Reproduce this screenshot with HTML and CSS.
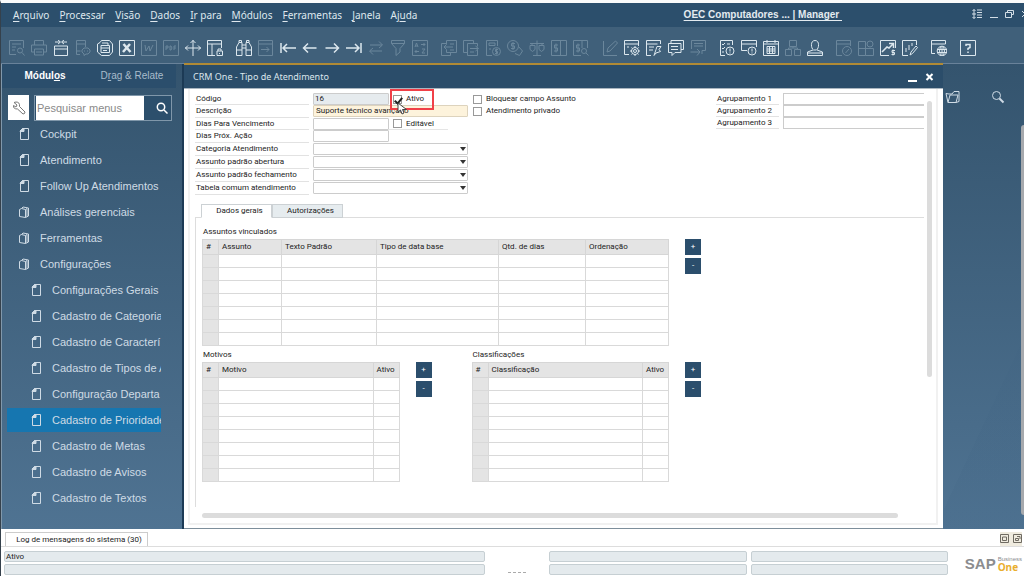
FILE: index.html
```html
<!DOCTYPE html>
<html lang="pt-BR">
<head>
<meta charset="utf-8">
<title>OEC Computadores | Manager</title>
<link rel="stylesheet" href="styles.css">
</head>
<body>
<div class="app">
  <header class="menubar">
    <nav class="menus">
      <button><u>A</u>rquivo</button><button><u>P</u>rocessar</button><button><u>V</u>isão</button><button><u>D</u>ados</button><button><u>I</u>r para</button><button><u>M</u>ódulos</button><button><u>F</u>erramentas</button><button><u>J</u>anela</button><button>Aj<u>u</u>da</button>
    </nav>
    <a class="company" href="#">OEC Computadores ... | Manager&nbsp;</a>
    <div class="winctl">
      <svg width="10" height="10" viewBox="0 0 10 10"><path d="M2 .5v9M.5 2L2 .5 3.500 2M.5 8L2 9.500 3.500 8M5 1h5M5 3.500h5M5 6h5M5 8.500h5M0 5h4"/></svg>
      <svg width="8" height="10" viewBox="0 0 8 10"><path d="M0 8.500h8"/></svg>
      <svg width="9" height="10" viewBox="0 0 9 10"><path d="M2.500 3.500v-2h6v4h-2M.5 3.500h6v5h-6z"/></svg>
      <svg width="8" height="10" viewBox="0 0 8 10"><path d="M1 2l6 6M7 2L1 8"/></svg>
    </div>
  </header>

  <div class="toolbar">
    <div class="tools">
      <button class="off" aria-label="Visualizar"><svg viewBox="0 0 16 16"><path d="M7 14.500H.5V.5h14V8M3 4h9M3 7h4M3 10h3"/><circle cx="11" cy="10.500" r="2.500"/><path d="M13 12.500l2.500 3"/></svg></button>
      <button class="off" aria-label="Imprimir"><svg viewBox="0 0 16 16"><path d="M3.500 5V.5h9V5M3.500 12H.5V5h15v7h-3M3.500 9h9v6h-9zM5 12h6"/></svg></button>
      <button aria-label="Enviar"><svg viewBox="0 0 16 16"><path d="M1.500 6h13v9.500h-13zM1.500 9h13M2 2h5M9 2h5M5 0l2.500 2L5 4M11 0L8.500 2 11 4"/></svg></button>
      <button class="off" aria-label="SMS"><svg viewBox="0 0 16 16"><path d="M5 14.500H1.500V.5h9V7M1.500 4h9M1.500 11h4M9 8h4l2 2v2l-2 2h-2l-2 1.500V14l-2-2v-2zM9 11h1M12 11h1"/></svg></button>
      <button aria-label="Fax"><svg viewBox="0 0 16 16"><path d="M3 2.500L4.500.5h8L15.500 4v8l-3 3.500h-8L.5 12V4zM4 5.500v7h8.500v-7zM4 8h8.500M5 3h6v2M6 10.500h4"/></svg></button>
      <button aria-label="Excel"><svg viewBox="0 0 16 16"><path d="M.5.5h15v15H.5z"/><path class="bold" d="M4.500 4l7 8M11 4l-7 8"/></svg></button>
      <button class="off" aria-label="Word"><svg viewBox="0 0 16 16"><path d="M.5.5h15v15H.5zM4 5l1 6 3-5 1 5 3-6"/></svg></button>
      <button class="off" aria-label="PDF"><svg viewBox="0 0 16 16"><path d="M.5.5h15v15H.5zM3 10V6h2v2H3M7 6v4h1l1-2-1-2zM11 10V6h2M11 8h2"/></svg></button>
      <button aria-label="Mover"><svg viewBox="0 0 16 16"><path d="M8 0v16M0 8h16M5.500 3L8 .5 10.500 3M3 5.500L.5 8 3 10.500M13 5.500L15.500 8 13 10.500"/></svg></button>
      <button aria-label="Bloquear"><svg viewBox="0 0 16 16"><path d="M8 15.500H.5V.5h14V8M.5 4h14M5 4v11.500M10 11h5.500v4.500H10zM11 11V9h3v2M12.500 13v1"/></svg></button>
    </div>
    <div class="tools">
      <button aria-label="Localizar"><svg viewBox="0 0 16 16"><path d="M.5 15.500V7L3 2.500h3V15.500zM15.500 15.500V7L13 2.500h-3V15.500zM6 5h4M6 8h4M.5 10H6M10 10h5.500M3 2.500V.5h2.500v2M10.500 2.500v-2H13v2"/></svg></button>
      <button class="off" aria-label="Adicionar"><svg viewBox="0 0 16 16"><path d="M.5.5h14v15H.5zM.5 4h14M3 9.500h8M8.500 7l2.500 2.500L8.500 12"/></svg></button>
      <button aria-label="Primeiro registro"><svg viewBox="0 0 16 16"><path class="mid" d="M1 3v10M3 8h13M7 4L3 8l4 4"/></svg></button>
      <button aria-label="Anterior"><svg viewBox="0 0 16 16"><path class="mid" d="M1.500 8h13M6 3.500L1.500 8 6 12.500"/></svg></button>
      <button aria-label="Próximo"><svg viewBox="0 0 16 16"><path class="mid" d="M1.500 8h13M10 3.500L14.500 8 10 12.500"/></svg></button>
      <button aria-label="Último registro"><svg viewBox="0 0 16 16"><path class="mid" d="M15 3v10M0 8h13M9 4l4 4-4 4"/></svg></button>
      <button class="off" aria-label="Atualizar"><svg viewBox="0 0 16 16"><path d="M2 5h12M11 1.500L14.500 5 11 8M14 11H2M5 8l-3.500 3L5 14.500"/></svg></button>
      <button class="off" aria-label="Filtrar"><svg viewBox="0 0 16 16"><path d="M1.500.5h13v3L10 8.500V12l-4 3.500v-7L1.500 3.500zM1.500 3.500h13"/></svg></button>
      <button class="off" aria-label="Ordenar"><svg viewBox="0 0 16 16"><path d="M.5.5h15v15H.5zM3 7l1.500-4L6 7M3.500 6h2M9 4.500h4M11.500 3L13 4.500 11.500 6M10 9h3l-3 4h3M3 11.500h4M4.500 10L3 11.500 4.500 13"/></svg></button>
    </div>
    <div class="tools">
      <button class="off" aria-label="Documento base"><svg viewBox="0 0 16 16"><path d="M5.500 4.500v-4h10v12h-10V9.500M9.500 12.500v3h-9v-12h5M3 7h9M5.500 4.500L3 7l2.500 2.500M9 4h4M9 10h4"/></svg></button>
      <button class="off" aria-label="Documento destino"><svg viewBox="0 0 16 16"><path d="M4 12.500H.5V.5h10v3M4.500 3.500h10v3M14.500 10v5.500h-10v-12M7 8.500h8M12.500 6l3 2.500-3 2.500M7 12h4"/></svg></button>
      <button class="off" aria-label="Lucro bruto"><svg viewBox="0 0 16 16"><path d="M7 15.500H1.500V.5h11V6M4 3h6v2.500H4zM4 9h2"/><circle cx="11.500" cy="11.500" r="4"/><path d="M13 9.500h-2.500v2h2v2H10M11.500 8.500v6"/></svg></button>
      <button class="off" aria-label="Meios de pagamento"><svg viewBox="0 0 16 16"><circle cx="6" cy="6" r="5.500"/><path d="M8 3.500H4.500v2.500h3v2.500H4M6 2v8M12 7l3.500 4-3 4.500L8 13.500"/></svg></button>
      <button class="off" aria-label="Balança"><svg viewBox="0 0 16 16"><path d="M8 .5v15M1 3.500h14M4 15.500h8M1 5.500h5v4l-2.500 2L1 9.500zM10 5.500h5v4l-2.500 2-2.500-2zM3 3.500v2M13 3.500v2"/></svg></button>
      <button class="off" aria-label="Razão"><svg viewBox="0 0 16 16"><path d="M.5.5h15v15H.5zM9.500.5v15M7 5H3.500v3h3v3H3M5 3.500v9"/></svg></button>
      <button class="off" aria-label="Consulta de razão"><svg viewBox="0 0 16 16"><path d="M8 15.500H.5V.5h14V8M9 .5V8M7 5H3.500v3h3v3H3M5 3.500v9"/><circle cx="11" cy="11" r="2.500"/><path d="M13 13l2.500 2.500"/></svg></button>
    </div>
    <div class="tools">
      <button class="off" aria-label="Editar"><svg viewBox="0 0 16 16"><path d="M1.500 1v14.500H15M5 12l1-4 7.500-7L15.500 3 8 11z"/></svg></button>
      <button aria-label="Configurar formulário"><svg viewBox="0 0 16 16"><path d="M5 14.500H.5V.5h14V6M.5 4h14M3 7h2"/><circle cx="11" cy="11" r="3.500"/><circle cx="11" cy="11" r="1.500"/><path d="M11 6v2M11 14v2M6 11h2M14 11h2M7.500 7.500l1 1M13.500 13.500l1 1M14.500 7.500l-1 1M8.500 13.500l-1 1"/></svg></button>
      <button aria-label="Assistente"><svg viewBox="0 0 16 16"><path d="M5 15.500H.5V.5h14V4M.5 4h11M3 7h5M3 10h4M8 15.500l2-6 1-3h4l-2 3 1.500 2L10 13z"/></svg></button>
      <button aria-label="Mensagens"><svg viewBox="0 0 16 16"><path d="M3 3V.5h12.500v9H13M.5 3.500H13v9H7l-3 3v-3H.5zM3 6.500h7M3 9.500h7"/></svg></button>
      <button class="off" aria-label="Respostas"><svg viewBox="0 0 16 16"><path d="M1.500 9V.5h14v10H12M4 3.500h9M4 6h9M.5 12H10M7 9l3 3-3 3.500M12 10.500V14"/></svg></button>
    </div>
    <div class="tools">
      <button aria-label="Tarefas"><svg viewBox="0 0 16 16"><path d="M6 15.500H1.500V.5h12V5M3 4l1 1 2-2M3 8l1 1 2-2M3 12h2M8 4h3"/><circle cx="11" cy="11" r="4"/><path d="M11 8.500v3M11 12.500v1"/></svg></button>
      <button aria-label="Alertas"><svg viewBox="0 0 16 16"><path d="M6 10.500H.5V.5h15V7M.5 4h15"/><circle cx="11" cy="11" r="4"/><path d="M11 8.500v3M11 12.500v1"/></svg></button>
      <button aria-label="Calendário"><svg viewBox="0 0 16 16"><path d="M.5 1.500h15v14H.5zM.5 4h15M4 0v3M12 0v3M4 6.500h8v7H4zM4 9h8M4 11h8M6.500 6.500v7M9.500 6.500v7"/></svg></button>
      <button class="off" aria-label="Hierarquia"><svg viewBox="0 0 16 16"><path d="M4.500.5h7v6h-7zM.5 9.500h6v6h-6zM9.500 9.500h6v6h-6zM8 6.500v1.500M3.500 9.500V8h9v1.500"/></svg></button>
      <button aria-label="Usuário"><svg viewBox="0 0 16 16"><path d="M8 .5c5 0 4 8 1.500 9.500h-3C4 8.500 3 .5 8 .5zM6 10L.5 12v3.500h15V12L10 10M.5 13h15"/></svg></button>
    </div>
    <div class="tools">
      <button class="off" aria-label="Painel"><svg viewBox="0 0 16 16"><path d="M6 15.500H.5V.5h14V6M.5 4h14"/><circle cx="11" cy="11" r="4.500"/><path d="M9.500 13L13 9"/></svg></button>
      <button class="off" aria-label="Widgets"><svg viewBox="0 0 16 16"><path d="M.5 1.500h7v14h-7zM.5 8.500h15v7h-8"/><circle cx="12" cy="4" r="3"/></svg></button>
      <button aria-label="Indicadores"><svg viewBox="0 0 16 16"><path d="M9 15.500H.5V.5h15V8"/><path class="mid" d="M2 12l5-5 2 1 4-4M9 3.500h4.500V8"/><path d="M15 10.500h-3v2h2.500v2H11.500M13 9.500v6"/></svg></button>
      <button aria-label="Relatório"><svg viewBox="0 0 16 16"><path d="M6 15.500H.5V.5h14V5M4 12V8M7 10V5M10 6V3M8 15l1-3 5-6 1.500 1.500-5 6z"/></svg></button>
    </div>
    <div class="tools">
      <button aria-label="Navegador"><svg viewBox="0 0 16 16"><path d="M4 13.500H.5V.5h14V4M.5 4h14"/><circle cx="11" cy="11" r="4.800"/><path d="M6 9.500h10M6 12.500h10M11 6v10M9.500 6.500q-2 4.500 0 9M12.500 6.500q2 4.500 0 9"/></svg></button>
    </div>
    <div class="tools">
      <button aria-label="Ajuda"><svg viewBox="0 0 16 16"><path d="M.5.5h15v15H.5z"/><path class="mid" d="M6 6V4.500h4v3L8 8.500V10M8 11.500V13"/></svg></button>
    </div>
  </div>

  <main class="workspace">
    <aside class="sidebar">
      <div class="side-tabs"><button class="on">Módul<u>o</u>s</button><button>D<u>r</u>ag &amp; Relate</button></div>
      <div class="side-search">
        <button class="wrench" aria-label="Configurar"><svg width="14" height="14" viewBox="0 0 14 14"><path d="M2 1.500L5 4 4 6 1.500 4.500Q1 8 5.500 8L11 13q2 0 2-2L7.500 5.500Q8 1 4 1z"/></svg></button>
        <div class="searchbox"><input type="text" placeholder="Pesquisar menus" aria-label="Pesquisar menus"><button aria-label="Pesquisar"><svg width="12" height="12" viewBox="0 0 12 12"><circle cx="5" cy="5" r="3.700"/><path d="M8 8l3.500 3.500"/></svg></button></div>
      </div>
      <svg class="defs" aria-hidden="true"><symbol id="page" viewBox="0 0 10 12"><path d="M3.500.5h6v11h-8V3z"/><path class="fold" d="M1 3.500V3L3.500.5H5v3z"/></symbol><symbol id="stack" viewBox="0 0 10 12"><path d="M.5 3.500l2-1 4 1v8l-6-1zM2.500 2.500L4 1l5.500 1v8l-3 1.500M6.500 3.500L8 2.500v8"/></symbol></svg>
      <ul class="tree">
        <li><svg><use href="#page"/></svg><span>Cockpit</span></li>
        <li><svg><use href="#page"/></svg><span>Atendimento</span></li>
        <li><svg><use href="#page"/></svg><span>Follow Up Atendimentos</span></li>
        <li><svg><use href="#stack"/></svg><span>Análises gerenciais</span></li>
        <li><svg><use href="#stack"/></svg><span>Ferramentas</span></li>
        <li><svg><use href="#stack"/></svg><span>Configurações</span></li>
        <li class="sub"><svg><use href="#page"/></svg><span>Configurações Gerais</span></li>
        <li class="sub"><svg><use href="#page"/></svg><span>Cadastro de Categoria</span></li>
        <li class="sub"><svg><use href="#page"/></svg><span>Cadastro de Caracterí</span></li>
        <li class="sub"><svg><use href="#page"/></svg><span>Cadastro de Tipos de A</span></li>
        <li class="sub"><svg><use href="#page"/></svg><span>Configuração Departa</span></li>
        <li class="sub sel"><svg><use href="#page"/></svg><span>Cadastro de Prioridade</span></li>
        <li class="sub"><svg><use href="#page"/></svg><span>Cadastro de Metas</span></li>
        <li class="sub"><svg><use href="#page"/></svg><span>Cadastro de Avisos</span></li>
        <li class="sub"><svg><use href="#page"/></svg><span>Cadastro de Textos</span></li>
      </ul>
    </aside>

    <section class="window">
      <div class="titlebar"><h1>CRM One - Tipo de Atendimento</h1>
        <button aria-label="Minimizar"><svg width="9" height="10" viewBox="0 0 9 10"><path d="M0 9h9"/></svg></button>
        <button aria-label="Fechar"><svg width="9" height="10" viewBox="0 0 9 10"><path d="M1.500 2l6 6M7.500 2l-6 6"/></svg></button>
      </div>
      <div class="frame">
        <div class="content">
          <form class="fields">
            <div class="main-fields">
              <label for="cod">Código</label><input id="cod" class="ro" value="16" readonly>
              <div class="check marked"><input type="checkbox" id="ativo" checked><label for="ativo">Ativo</label>
                <svg class="pointer" width="11" height="13" viewBox="0 0 11 13"><path d="M1 1v9l2.500-2L5 12l2-1-1.500-3.500h4z"/></svg></div>
              <label for="desc">Descrição</label><input id="desc" class="wide hot" value="Suporte técnico avançado">
              <label for="venc">Dias Para Vencimento</label><input id="venc">
              <div class="check lined"><input type="checkbox" id="edit"><label for="edit">Editável</label></div>
              <label for="prox">Dias Próx. Ação</label><input id="prox">
              <label for="cat">Categoria Atendimento</label><div class="wide pick"><select id="cat"><option></option></select></div>
              <label for="abe">Assunto padrão abertura</label><div class="wide pick"><select id="abe"><option></option></select></div>
              <label for="fec">Assunto padrão fechamento</label><div class="wide pick"><select id="fec"><option></option></select></div>
              <label for="tab">Tabela comum atendimento</label><div class="wide pick"><select id="tab"><option></option></select></div>
            </div>
            <div class="flags">
              <div class="check"><input type="checkbox" id="bloq"><label for="bloq">Bloquear campo Assunto</label></div>
              <div class="check"><input type="checkbox" id="priv"><label for="priv">Atendimento privado</label></div>
            </div>
            <div class="groups">
              <label for="g1">Agrupamento 1</label><input id="g1">
              <label for="g2">Agrupamento 2</label><input id="g2">
              <label for="g3">Agrupamento 3</label><input id="g3">
            </div>
          </form>
          <div class="tabs"><button class="on">Dados gerais</button><button>Autorizações</button></div>
          <div class="panel">
            <h2>Assuntos vinculados</h2>
            <div class="block first">
              <table>
                <colgroup><col class="n"><col class="a"><col class="b"><col class="c"><col class="d"><col></colgroup>
                <thead><tr><th>#</th><th>Assunto</th><th>Texto Padrão</th><th>Tipo de data base</th><th>Qtd. de dias</th><th>Ordenação</th></tr></thead>
                <tbody>
                  <tr><td></td><td></td><td></td><td></td><td></td><td></td></tr>
                  <tr><td></td><td></td><td></td><td></td><td></td><td></td></tr>
                  <tr><td></td><td></td><td></td><td></td><td></td><td></td></tr>
                  <tr><td></td><td></td><td></td><td></td><td></td><td></td></tr>
                  <tr><td></td><td></td><td></td><td></td><td></td><td></td></tr>
                  <tr><td></td><td></td><td></td><td></td><td></td><td></td></tr>
                  <tr><td></td><td></td><td></td><td></td><td></td><td></td></tr>
                </tbody>
              </table>
              <div class="pm"><button>+</button><button>-</button></div>
            </div>
            <div class="pair">
              <div>
                <h2>Motivos</h2>
                <div class="block">
                  <table>
                    <colgroup><col class="n"><col><col class="e"></colgroup>
                    <thead><tr><th>#</th><th>Motivo</th><th>Ativo</th></tr></thead>
                    <tbody>
                      <tr><td></td><td></td><td></td></tr><tr><td></td><td></td><td></td></tr>
                      <tr><td></td><td></td><td></td></tr><tr><td></td><td></td><td></td></tr>
                      <tr><td></td><td></td><td></td></tr><tr><td></td><td></td><td></td></tr>
                      <tr><td></td><td></td><td></td></tr><tr><td></td><td></td><td></td></tr>
                    </tbody>
                  </table>
                  <div class="pm"><button>+</button><button>-</button></div>
                </div>
              </div>
              <div>
                <h2>Classificações</h2>
                <div class="block">
                  <table>
                    <colgroup><col class="n"><col><col class="e"></colgroup>
                    <thead><tr><th>#</th><th>Classificação</th><th>Ativo</th></tr></thead>
                    <tbody>
                      <tr><td></td><td></td><td></td></tr><tr><td></td><td></td><td></td></tr>
                      <tr><td></td><td></td><td></td></tr><tr><td></td><td></td><td></td></tr>
                      <tr><td></td><td></td><td></td></tr><tr><td></td><td></td><td></td></tr>
                      <tr><td></td><td></td><td></td></tr><tr><td></td><td></td><td></td></tr>
                    </tbody>
                  </table>
                  <div class="pm"><button>+</button><button>-</button></div>
                </div>
              </div>
            </div>
          </div>
          <div class="hscroll"></div>
        </div>
        <div class="vscroll"></div>
      </div>
    </section>

    <aside class="dock">
      <svg width="15" height="14" viewBox="0 0 15 14"><path d="M4 4L1 3.500l2 9h8l3-1V1.500H9L7 4H4M3 12.500L5 5h8l-2 7.500"/></svg>
      <svg width="14" height="14" viewBox="0 0 14 14"><circle cx="5.500" cy="5.500" r="4"/><path class="handle" d="M8.500 8.500l4 4"/></svg>
      <div class="dock-scroll"></div>
    </aside>
  </main>

  <footer class="bottom">
    <div class="logbar"><button>Log de mensagens do sistema (30)</button>
      <div class="logctl">
        <svg width="9" height="9" viewBox="0 0 9 9"><path d="M.5.5h8v8h-8zM2.500 3h4v3.500h-4z"/></svg>
        <svg width="9" height="9" viewBox="0 0 9 9"><path d="M.5.5h8v8h-8zM4 2.500h3V5M2.500 4.500h3v2h-3z"/></svg>
      </div>
    </div>
    <div class="status">
      <div class="cells"><output>Ativo</output><output></output></div>
      <div class="clock"></div>
      <div class="cells"><output></output><output></output></div>
      <div class="cells"><output></output><output></output></div>
      <div class="logo"><b>SAP</b><span>Business<i>One</i></span></div>
    </div>
  </footer>
</div>
</body>
</html>
```
FILE: styles.css
```css
* { box-sizing: border-box; }
body { margin: 0; font: 8px/12px Roboto, "Noto Sans", sans-serif; color: #222; background: #fff; }
button { font: inherit; color: inherit; border: 0; padding: 0; background: none; }
svg { fill: none; stroke: currentColor; flex: none; }
h1, h2, ul { margin: 0; padding: 0; font-weight: 400; }

.app { height: 100vh; display: flex; flex-direction: column; overflow: hidden; border-top: 3px solid #fafafa; border-left: 1px solid #35414c; }

.menubar { height: 24px; flex: none; display: flex; align-items: center; background: #2c4f6c; color: #dfe8ee; position: relative; }
.menus { display: flex; gap: 10px; padding-left: 12px; font: 10px/14px "Noto Sans", sans-serif; flex: 1; }
.menus u { text-underline-offset: 2px; }
.company { color: #e4ebf0; font: bold 10px/14px "Liberation Sans", sans-serif; text-underline-offset: 2px; margin-right: 182px; }
.winctl { position: absolute; right: -5px; top: 6px; display: flex; gap: 7px; color: #d3dee6; }
.winctl svg:first-child { margin-right: 1px; }

.toolbar { height: 37px; flex: none; display: flex; gap: 7px; padding: 5px 0 0 5px; background: #40607a; border-bottom: 1px solid #69829a; }
.tools { display: flex; align-items: center; }
.tools button { width: 22px; height: 30px; display: grid; place-items: center; color: #dce7ee; }
.tools .off { color: #6b879c; }
.tools svg { width: 16px; height: 16px; }
.bold { stroke-width: 2.500; }
.mid { stroke-width: 1.500; }

.workspace { flex: 1; min-height: 0; display: flex; background: linear-gradient(#34546e, #4f7392); }

.sidebar { width: 183px; flex: none; border-left: 1px solid #8198ab; border-right: 2px solid #1c3a55; color: #cfdbe5; font: 11px/14px "Liberation Sans", sans-serif; }
.side-tabs { height: 24px; display: grid; grid-template-columns: 86px 1fr; background: #2b4e6c; font-size: 10px; color: #a9bccb; margin-right: 6px; }
.side-tabs .on { color: #fff; font-weight: bold; }
.side-search { display: flex; gap: 5px; padding: 7px 10px 0 6px; height: 34px; }
.wrench { width: 21px; height: 25px; background: #fff; color: #777; display: grid; place-items: center; }
.searchbox { flex: 1; min-width: 0; height: 26px; display: flex; border: 1px solid #8097aa; background: #2c4f6c; }
.searchbox input { flex: 1; min-width: 0; border: 0; margin-left: 1px; padding: 0 1px; background: #fff; font: inherit; outline: 0; }
.searchbox input::placeholder { color: #8a8a8a; opacity: 1; }
.searchbox button { width: 27px; padding-left: 8px; display: grid; place-items: center; color: #fff; }
.searchbox svg { stroke-width: 1.500; }
.defs { display: none; }
.tree { list-style: none; margin: 0 21px 0 5px; }
.tree li { height: 24px; margin: 0 0 2px; padding-left: 12px; display: flex; align-items: center; gap: 11px; overflow: hidden; white-space: nowrap; }
.tree li svg { width: 10px; height: 12px; }
.tree .sub { padding-left: 24px; }
.tree .sel { background: #1676b0; }
.fold { fill: currentColor; }

.window { flex: 1; min-width: 0; display: flex; flex-direction: column; border-top: 2px solid #b08a35; background: #fff; margin-top: -1px; border-bottom: 1px solid #7d8e9b; }
.titlebar { height: 24px; flex: none; display: flex; align-items: center; gap: 8px; padding: 0 9px; background: #2b4d6a; color: #fff; border-bottom: 1px solid #aab6c0; }
.titlebar h1 { flex: 1; font: 9px/12px "Noto Sans", sans-serif; color: #dbe5ec; }
.titlebar svg { display: block; stroke-width: 2; }
.frame { flex: 1; min-height: 0; display: flex; margin: 0 5px 3px 4px; border: 2px solid #f1f1f1; border-top: 0; }
.content { flex: 1; min-width: 0; overflow: hidden; padding: 4px 0 0 5px; display: flex; flex-direction: column; }
.vscroll { width: 5px; height: 276px; margin: 12px 4px 0 3px; border-radius: 3px; background: #dcdcdc; }
.hscroll { height: 5px; margin: 6px 26px 5px 7px; border-radius: 3px; background: #dcdcdc; flex: none; }

.fields { display: flex; gap: 5px; flex: none; }
.main-fields { display: grid; grid-template-columns: 118px 76px 79px; grid-template-rows: repeat(2, 12px 13px) repeat(4, 13px); }
.main-fields > label, .groups label { grid-column: 1; border-bottom: 1px solid #e2e2e2; margin-right: 4px; padding-left: 1px; white-space: nowrap; }
.main-fields > input, .groups input { width: 100%; height: 12px; font: inherit; color: #222; border: 1px solid #ccc; border-radius: 1px; padding: 0 2px; background: #fff; outline: 0; }
.main-fields > .ro { background: #e6ebee; padding-left: 1px; }
.main-fields > .hot { background: #fdf3dc; border-color: #ddd3bd; }
.wide { grid-column: 2 / 4; }
.pick { position: relative; height: 12px; }
.pick select { display: block; width: 100%; height: 12px; appearance: none; border: 1px solid #ccc; border-radius: 1px; background: #fff; font: inherit; }
.pick::after { content: ""; position: absolute; right: 2px; top: 4px; border: 3px solid transparent; border-top: 4px solid #333; border-bottom: 0; }
.check { display: flex; align-items: center; height: 12px; gap: 4px; white-space: nowrap; position: relative; }
.main-fields .check { padding-left: 4px; }
.check input { appearance: none; flex: none; width: 9px; height: 9px; margin: 0; border: 1px solid #999; background: #fff; }
.check input:checked::after { content: ""; display: block; width: 3px; height: 6px; margin: 0 0 0 2px; border: solid #222; border-width: 0 2px 2px 0; rotate: 40deg; }
.lined { border-bottom: 1px solid #e5e5e5; margin-right: 20px; }
.marked::before { content: ""; position: absolute; left: 1px; top: -4px; width: 40px; height: 17px; border: 2px solid #f04048; }
.pointer { position: absolute; left: 8px; top: 9px; z-index: 1; fill: #fff; stroke: #444; }
.flags { display: grid; grid-auto-rows: 12px; align-content: start; }
.groups { margin-left: auto; width: 208px; display: grid; grid-template-columns: 67px 1fr; grid-auto-rows: 12px; align-content: start; }
.groups input { border-right: 0; border-radius: 0; }

.tabs { display: flex; margin: 9px 0 -1px 6px; height: 14px; flex: none; z-index: 1; }
.tabs button { width: 71px; border: 1px solid #ccd1d4; background: #e6ecef; line-height: 12px; padding-left: 6px; }
.tabs .on { background: #fff; border-bottom-color: #fff; }
.panel { flex: 1; min-height: 0; border-top: 1px solid #ddd; border-left: 1px solid #ddd; padding: 8px 223px 0 6px; }
h2 { font-size: 8px; line-height: 12px; padding-left: 1px; margin-bottom: 1px; }
.block { display: flex; gap: 16px; }
.first { margin-bottom: 3px; }
.block table { flex: 1; min-width: 0; table-layout: fixed; border-collapse: collapse; }
.pm { display: grid; gap: 3px; align-content: start; flex: none; }
.pm button { width: 16px; height: 16px; background: #2b4e6c; color: #fff; }
.pair { display: grid; grid-template-columns: 1fr 1fr; gap: 40px; }
.pair .block { height: 118px; }
th { height: 15px; padding: 0 3px; text-align: left; font-weight: 400; background: #e4e4e4; border: 1px solid #d6d6d6; line-height: 10px; white-space: nowrap; }
td { height: 13px; padding: 0; border: 1px solid #d9d9d9; }
td:first-child { background: #e4e4e4; }
.n { width: 16px; } .a { width: 63px; } .b { width: 95px; } .c { width: 122px; } .d { width: 87px; } .e { width: 26px; }

.dock { width: 81px; flex: none; position: relative; padding: 26px 19px 0 2px; display: flex; justify-content: space-between; align-items: flex-start; color: #cfdbe5; background: linear-gradient(115deg, transparent 70%, #3d60801f 70%); }
.dock .handle { stroke-width: 2; }
.dock-scroll { position: absolute; right: 0; top: 61px; bottom: 14px; width: 3px; background: #a6a9ad; border-radius: 3px 0 0 3px; }

.bottom { flex: none; background: #fff; }
.logbar { height: 18px; display: flex; align-items: flex-end; justify-content: space-between; border-bottom: 1px solid #ddd; padding: 0 2px 0 4px; }
.logbar button { width: 143px; height: 14px; border: 1px solid #ccc; border-bottom: 0; padding-left: 5px; }
.logctl { display: flex; gap: 4px; padding: 2px 0 3px; color: #6f6b62; background: #efebdf; }
.status { display: flex; padding: 4px 2px 0 3px; height: 29px; gap: 4px; }
.cells { display: grid; grid-auto-rows: 11px; gap: 2px; align-content: start; flex: 198; }
.cells:first-child { flex: 483; }
.cells output { border: 1px solid #c6cfd3; border-radius: 2px; background: #e4eaed; line-height: 9px; padding-left: 1px; }
.clock { width: 56px; margin-bottom: 3px; flex: none; align-self: flex-end; }
.clock::after { content: ""; display: block; width: 18px; margin-left: 19px; border-bottom: 1px dashed #aaa; }
.logo { width: 70px; flex: none; display: flex; justify-content: flex-end; gap: 2px; align-items: center; font-family: "Liberation Sans", sans-serif; color: #8b8d8f; }
.logo b { font-size: 15px; }
.logo span { font-size: 6px; line-height: 7px; }
.logo i { display: block; font: bold 10px/9px "Open Sans", sans-serif; color: #e9ae2e; }
```
